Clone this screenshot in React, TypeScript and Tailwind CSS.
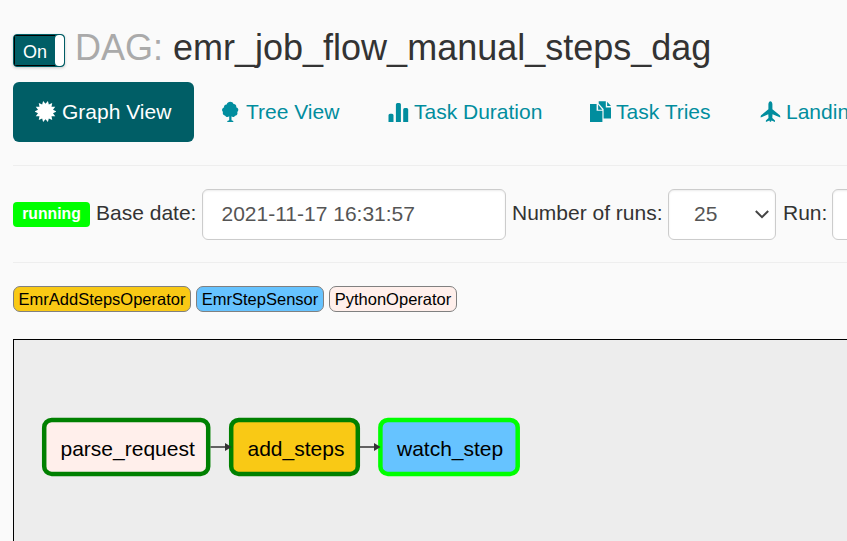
import type { ReactNode } from 'react';

function Icon({ children }: { children: ReactNode }) {
  return (
    <svg className="h-[21px] w-[21px] shrink-0 -translate-y-px" viewBox="0 0 21 21" fill="currentColor">
      {children}
    </svg>
  );
}

const starPoints = Array.from({ length: 28 }, (_, i) => {
  const radius = i % 2 === 0 ? 7.7 : 10.8;
  const angle = (i * Math.PI) / 14 - Math.PI / 2;
  return `${(10.5 + radius * Math.cos(angle)).toFixed(2)},${(10.5 + radius * Math.sin(angle)).toFixed(2)}`;
}).join(' ');

const CertificateIcon = () => (
  <Icon>
    <polygon points={starPoints} />
  </Icon>
);

const TreeIcon = () => (
  <Icon>
    <path d="M9.200 15.300C7.900 16.300 6 16.100 5.200 14.700C3.300 14.500 2.300 12.700 3 11C1.400 9.800 1.800 7 4.100 6.500C3.700 4.500 5 3.200 6.700 3.400C7.500-.1 12.700-.1 13.500 3.100C15.300 2.900 16.700 4.400 16.200 6.300C18.600 6.900 19 9.700 17.200 11C18 12.700 16.900 14.500 15.100 14.700C14.300 16.200 12.500 16.400 11.500 15.300V19.200L13.300 20V21H7.300V20L9.200 19.200Z" />
  </Icon>
);

const StatsIcon = () => (
  <Icon>
    <path d="M.5 21v-6.800q0-1.500 1.500-1.500h2q1.500 0 1.500 1.500V21zM7.900 21V3.500q0-1.500 1.500-1.500h2q1.500 0 1.500 1.500V21zM15.200 21V8.500q0-1.500 1.500-1.500h2q1.500 0 1.500 1.500V21z" />
  </Icon>
);

const DuplicateIcon = () => (
  <Icon>
    <path d="M0 3.100h6.600v6.700h5.800V21H0z" />
    <path d="M8.100 3.600l4.300 5.100H8.100z" />
    <path d="M8.700.2h7.100v6.300h5.500v11h-7.700V8.100L8.700 2.400z" />
    <path d="M17.100.8l4 4.200h-4z" />
  </Icon>
);

const PlaneIcon = () => (
  <Icon>
    <path d="M8.400 3C8.600 1.400 9.400.2 10.400.2S12.200 1.400 12.400 3V8.300L19.800 14.300Q20.300 14.800 20.300 16.600L12.500 13.300L12.300 17.100L15 19.500V21L11.500 19.600L11 20.800H9.900L9.400 19.600L5.900 21V19.500L8.500 17.100L8.300 13.300L.6 16.600Q.6 14.800 1.100 14.300L8.400 8.300Z" />
  </Icon>
);

function Tab({ icon, label, width, active = false }: { icon: ReactNode; label: string; width: string; active?: boolean }) {
  return (
    <a
      className={`flex h-[60px] shrink-0 items-center rounded-[6px] ${width} ${
        active ? 'gap-[6px] bg-[#005e66] pl-[22px] text-white' : 'gap-[5px] pl-[23px] text-[#018d9e]'
      }`}
    >
      {icon}
      <span>{label}</span>
    </a>
  );
}

const nodes = [
  { label: 'parse_request', x: 44.2, width: 164, textX: 60.5, fill: '#ffefeb', stroke: '#008000' },
  { label: 'add_steps', x: 231.2, width: 126.6, textX: 247.5, fill: '#f9c915', stroke: '#008000' },
  { label: 'watch_step', x: 380.4, width: 137.3, textX: 397, fill: '#66c3ff', stroke: '#00ff00' },
];

function Graph() {
  return (
    <svg className="h-[201px] w-[833px]" viewBox="14 340 833 201">
      {nodes.map((node) => (
        <g key={node.label}>
          <rect x={node.x} y="419.900" width={node.width} height="54" rx="7.500" fill={node.fill} stroke={node.stroke} strokeWidth="4.500" />
          <text x={node.textX} y="456" fontSize="21" fill="#000">
            {node.label}
          </text>
        </g>
      ))}
      <g fill="#333">
        <path d="M210.500 446.300h15v1.500h-15zM225 443l6.500 4l-6.500 4z" />
        <path d="M360 446.300h15v1.500h-15zM374 443l6.500 4l-6.500 4z" />
      </g>
    </svg>
  );
}

export default function App() {
  return (
    <div className="flex h-[541px] w-[847px] flex-col overflow-hidden bg-[#fafafa] pl-[13px] font-['Liberation_Sans',Arial,sans-serif] text-[21px] leading-[30px] whitespace-nowrap text-[#333]">
      <header className="flex h-[82px] shrink-0 items-start pt-[28px]">
        <div className="mt-[6px] flex h-[33px] w-[52px] shrink-0 overflow-hidden rounded-[4px] border border-[#005e66] bg-[#005e66] shadow-[0_1px_3px_rgba(0,0,0,0.2)]">
          <div className="flex w-[41px] items-center justify-center border-y border-l border-black pt-[2px] text-[18px] text-white">
            On
          </div>
          <div className="flex-1 rounded-[4px] bg-white" />
        </div>
        <h1 className="ml-[10px] text-[36px] leading-[40px]">
          <span className="text-[#aaa]">DAG:</span> emr_job_flow_manual_steps_dag
        </h1>
      </header>
      <nav className="flex h-[60px] shrink-0 gap-[3px]">
        <Tab active icon={<CertificateIcon />} label="Graph View" width="w-[181px]" />
        <Tab icon={<TreeIcon />} label="Tree View" width="w-[165px]" />
        <Tab icon={<StatsIcon />} label="Task Duration" width="w-[199px]" />
        <Tab icon={<DuplicateIcon />} label="Task Tries" width="w-[167px]" />
        <Tab icon={<PlaneIcon />} label="Landing Times" width="w-[204px]" />
      </nav>
      <form className="mt-[23px] flex h-[98px] shrink-0 items-center border-y border-[#eee]">
        <span className="mt-[1px] flex h-[25px] w-[77px] shrink-0 items-center justify-center rounded-[4px] bg-[#00ff00] pb-[2px] text-[15.750px] font-bold text-white">
          running
        </span>
        <label className="ml-[6px] w-[106px] shrink-0 pb-[3px]">Base date:</label>
        <div className="flex h-[51px] w-[304px] shrink-0 items-center rounded-[6px] border border-[#ccc] bg-white pl-[18.500px] text-[#555] shadow-[inset_0_1px_2px_rgba(0,0,0,0.075)]">
          2021-11-17 16:31:57
        </div>
        <label className="ml-[6px] w-[156px] shrink-0 pb-[3px]">Number of runs:</label>
        <div className="flex h-[51px] w-[108px] shrink-0 items-center justify-between rounded-[6px] border border-[#ccc] bg-white pr-[6px] pl-[25px] text-[#555] shadow-[inset_0_1px_2px_rgba(0,0,0,0.075)]">
          25
          <svg className="h-[9px] w-[14px]" viewBox="0 0 14 9" fill="none" stroke="#444" strokeWidth="2">
            <path d="M.8 1L7 7.200L13.200 1" />
          </svg>
        </div>
        <label className="ml-[7px] w-[49px] shrink-0 pb-[3px]">Run:</label>
        <div className="h-[51px] w-[200px] shrink-0 rounded-[6px] border border-[#ccc] bg-white shadow-[inset_0_1px_2px_rgba(0,0,0,0.075)]" />
      </form>
      <div className="mt-[23px] flex h-[26px] shrink-0 gap-[5px] text-[16.500px] leading-[25px] text-black">
        <span className="w-[178px] rounded-[7px] border border-[#808080] bg-[#f9c915] text-center">EmrAddStepsOperator</span>
        <span className="w-[128px] rounded-[7px] border border-[#808080] bg-[#66c3ff] text-center">EmrStepSensor</span>
        <span className="w-[128px] rounded-[7px] border border-[#808080] bg-[#ffefeb] text-center">PythonOperator</span>
      </div>
      <main className="mt-[27px] flex-1 border-t border-l border-black bg-[#ededed]">
        <Graph />
      </main>
    </div>
  );
}
